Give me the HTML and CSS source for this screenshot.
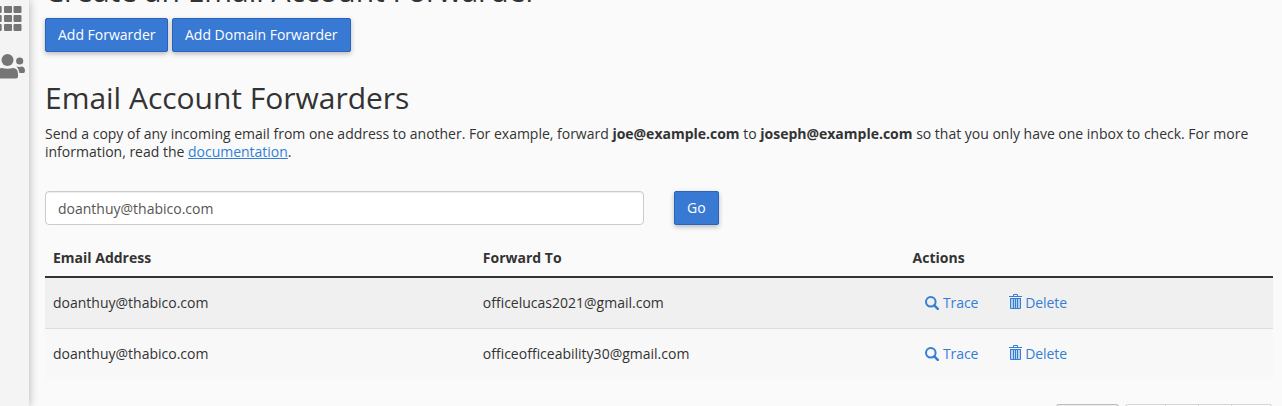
FILE: index.html
```html
<!DOCTYPE html>
<html lang="en">
<head>
  <meta charset="UTF-8" />
  <meta name="viewport" content="width=device-width, initial-scale=1.0"/>
  <title>Email Account Forwarders</title>
  <link rel="stylesheet" href="styles.css">
</head>
<body>
  <!-- shared icons -->
  <svg class="icon-defs">
    <symbol id="icon-search" viewBox="0 0 14 14">
      <circle cx="5.8" cy="5.8" r="4.8" fill="none" stroke="currentColor" stroke-width="2"/>
      <path d="M9.3 9.3l3.500 3.500" stroke="currentColor" stroke-width="2.500" stroke-linecap="round"/>
    </symbol>
    <symbol id="icon-trash" viewBox="0 0 13 15">
      <path d="M1.500 5h10v9.500h-10z" fill="currentColor" fill-opacity=".3"/>
      <path d="M4.500 2.500v-2h4v2M0 2.500h13" fill="none" stroke="currentColor"/>
      <path d="M1 4.500h11M1.500 5v9.500h10V5M4.500 5v9M6.500 5v9M8.500 5v9" fill="none" stroke="currentColor"/>
    </symbol>
  </svg>

  <div class="sidebar">
    <svg class="side-icon" width="29" height="32" viewBox="0 0 29 32" fill="currentColor">
      <rect x="-6" y="6" width="7.700" height="7" rx="1"/><rect x="4" y="6" width="8" height="7" rx="1"/><rect x="13.500" y="6" width="8" height="7" rx="1"/>
      <rect x="-6" y="15" width="7.700" height="7" rx="1"/><rect x="4" y="15" width="8" height="7" rx="1"/><rect x="13.500" y="15" width="8" height="7" rx="1"/>
      <rect x="-6" y="24" width="7.700" height="7" rx="1"/><rect x="4" y="24" width="8" height="7" rx="1"/><rect x="13.500" y="24" width="8" height="7" rx="1"/>
    </svg>
    <svg class="side-icon users" width="29" height="28" viewBox="0 0 29 28" fill="currentColor">
      <circle cx="7.500" cy="8" r="6"/>
      <path d="M-3 27v-5q0-6 5-6q5.500 1.500 11 0q5 0 5 6v2.500q0 2-2 2h-19z"/>
      <circle cx="19.700" cy="9" r="3.600"/>
      <path d="M16.500 14.500q3 .8 5.500 0q3 .5 3 4.500q0 2-1.500 2h-4q-.5-4-3-6.500z"/>
    </svg>
  </div>

  <div class="content">
    <h2 class="create-title">Create an Email Account Forwarder</h2>
    <div class="buttons">
      <a class="btn add">Add Forwarder</a>
      <a class="btn add-domain">Add Domain Forwarder</a>
    </div>

    <h2>Email Account Forwarders</h2>
    <p>Send a copy of any incoming email from one address to another. For example, forward <strong>joe@example.com</strong> to <strong>joseph@example.com</strong> so that you only have one inbox to check. For more information, read the <a href="#">documentation</a>.</p>

    <div class="search">
      <input type="text" value="doanthuy@thabico.com">
      <button class="btn">Go</button>
    </div>

    <table>
      <thead>
        <tr><th>Email Address</th><th>Forward To</th><th class="actions-col">Actions</th></tr>
      </thead>
      <tbody>
        <tr>
          <td>doanthuy@thabico.com</td>
          <td>officelucas2021@gmail.com</td>
          <td>
            <div class="actions">
              <a><svg class="search-icon"><use href="#icon-search"/></svg>Trace</a>
              <a><svg class="trash-icon"><use href="#icon-trash"/></svg>Delete</a>
            </div>
          </td>
        </tr>
        <tr>
          <td>doanthuy@thabico.com</td>
          <td>officeofficeability30@gmail.com</td>
          <td>
            <div class="actions">
              <a><svg class="search-icon"><use href="#icon-search"/></svg>Trace</a>
              <a><svg class="trash-icon"><use href="#icon-trash"/></svg>Delete</a>
            </div>
          </td>
        </tr>
      </tbody>
    </table>

    <div class="pager">
      <div class="page-size"></div>
      <div class="pages"><span></span><span></span><span></span><span></span></div>
    </div>
  </div>
</body>
</html>
```
FILE: styles.css
```css
* {
  box-sizing: border-box;
}
body {
  margin: 0;
  height: 406px;
  overflow: hidden;
  display: flex;
  background: #fafafa;
  color: #333;
  font-family: "Open Sans", sans-serif;
  font-size: 14px;
  line-height: 18px;
}
.icon-defs {
  display: none;
}
.sidebar {
  width: 29px;
  flex: none;
  background: #f4f4f4;
  color: #757575;
  box-shadow: 0 0 10px rgba(0,0,0,0.3);
}
.side-icon {
  display: block;
}
.side-icon.users {
  margin-top: 20px;
}
.content {
  flex: 1;
  min-width: 0;
  padding: 0 9px 0 16px;
}
h2 {
  margin: 0;
  font-size: 30px;
  line-height: 34px;
  font-weight: 400;
  letter-spacing: -0.02px;
}
.create-title {
  margin-top: -26px;
}
.buttons {
  display: flex;
  gap: 4px;
  margin: 10px 0 29px;
}
.btn {
  height: 34px;
  padding: 7px 12px;
  border: 1px solid #2a62bc;
  border-radius: 2px;
  background: #3779d3;
  color: #fff;
  font: 14px/18px "Open Sans", sans-serif;
  white-space: nowrap;
  box-shadow: 0 2px 5px rgba(0,0,0,0.26);
}
.btn.add {
  width: 123px;
}
.btn.add-domain {
  width: 179px;
}
a {
  color: #337fd6;
}
p {
  margin: 10px 0 30px;
  letter-spacing: -0.008px;
}
.search {
  display: flex;
  gap: 30px;
}
input {
  width: 599px;
  height: 34px;
  padding: 6px 12px;
  border: 1px solid #ccc;
  border-radius: 4px;
  background: #fff;
  color: #555;
  font: 14px/20px "Open Sans", sans-serif;
  box-shadow: inset 0 1px 1px rgba(0,0,0,0.075);
}
table {
  width: 100%;
  margin-top: 15px;
  table-layout: fixed;
  border-spacing: 0;
}
th {
  width: 35%;
  height: 38px;
  padding: 0 8px;
  border-bottom: 2px solid #333;
  text-align: left;
}
.actions-col {
  width: 30%;
}
td {
  height: 50px;
  padding: 0 8px;
  background: #f8f8f8;
}
tbody tr:first-child td {
  height: 51px;
  background: #f0f0f0;
  border-bottom: 1px solid #ddd;
}
.actions {
  display: flex;
  gap: 31px;
  padding-left: 12.4px;
}
.actions a {
  display: flex;
  align-items: center;
  letter-spacing: -0.1px;
}
.search-icon {
  width: 14px;
  height: 14px;
  margin: -1px 4px 0 0;
}
.trash-icon {
  width: 13px;
  height: 15px;
  margin: -3px 3px 0 0;
}
.pager {
  display: flex;
  justify-content: flex-end;
  gap: 6px;
  height: 3px;
  margin-top: 25px;
  padding-right: 1px;
}
.page-size {
  width: 63px;
  border: 1px solid #bbb;
  border-bottom: none;
  border-radius: 3px 3px 0 0;
  background: #eee;
}
.pages {
  display: flex;
  border: 1px solid #d5d5d5;
  border-bottom: none;
  border-radius: 4px 4px 0 0;
  background: #fff;
}
.pages span {
  width: 33px;
  border-right: 1px solid #d5d5d5;
}
.pages span:first-child {
  width: 40px;
}
.pages span:last-child {
  width: 39px;
  border-right: none;
}
```
